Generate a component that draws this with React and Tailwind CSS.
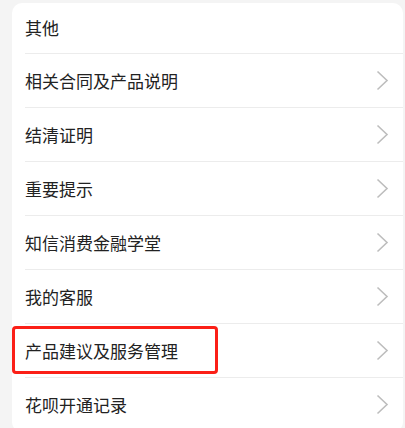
import React from 'react';

const items = [
  '相关合同及产品说明',
  '结清证明',
  '重要提示',
  '知信消费金融学堂',
  '我的客服',
  '产品建议及服务管理',
  '花呗开通记录',
];

// Grey chevron on the right of each row
const Chevron = () => (
  <svg width="13" height="21" viewBox="0 0 13 21" fill="none" className="shrink-0">
    <path d="M1.5 1.5 L11 10.5 L1.5 19.5" stroke="#bdbdbd" strokeWidth="1.6" />
  </svg>
);

const App = () => {
  return (
    <div
      className="w-[405px] h-[428px] overflow-hidden bg-[#f4f4f4] pt-[3px] pl-[12px]"
      style={{ fontFamily: '"Noto Sans CJK SC", "Noto Sans", sans-serif' }}
    >
      <div className="w-[391px] bg-white rounded-[10px]">
        <div className="pl-[13px]">
          <div className="h-[51px] flex items-center border-b border-[#ececec] text-[17px] text-[#222]">
            其他
          </div>
        </div>

        {items.map((label) => (
          <div key={label} className="relative pl-[13px]">
            <div className="h-[54px] flex items-center justify-between border-b border-[#ececec] pr-[14px]">
              <span className="text-[17px] text-[#222]">{label}</span>
              <Chevron />
            </div>
            {label === '产品建议及服务管理' && (
              <div className="absolute left-[0px] top-[2px] w-[206px] h-[48px] border-[3px] border-[#fb1f17] rounded-[4px]" />
            )}
          </div>
        ))}
      </div>
    </div>
  );
};

export default App;
